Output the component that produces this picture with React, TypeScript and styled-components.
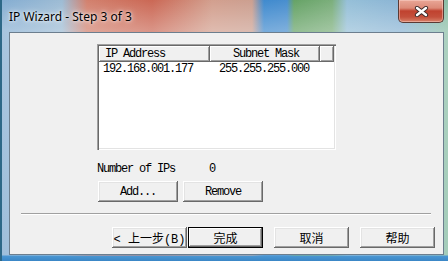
import styled, { createGlobalStyle } from 'styled-components'

const GlobalStyle = createGlobalStyle`
    html, body {
        margin: 0;
        padding: 0;
    }
    body {
        width: 448px;
        height: 261px;
        overflow: hidden;
        background: #6fa3cf;
    }
`

const mono = `"Liberation Mono", "DejaVu Sans Mono", monospace`
const cjk = `"Liberation Mono", "Noto Sans CJK SC", sans-serif`

export default function App() {
    return (
        <>
            <GlobalStyle />
            <StyledWindow>
                <StyledTitleBar>
                    <StyledTitle>IP Wizard - Step 3 of 3</StyledTitle>
                    <StyledClose aria-label="Close">
                        <svg width="15" height="11" viewBox="0 0 15 11">
                            <path d="M3 2 L12 9 M12 2 L3 9" stroke="#3a2a2a" strokeWidth="4.2" strokeLinecap="round" />
                            <path d="M3 2 L12 9 M12 2 L3 9" stroke="#ffffff" strokeWidth="2.4" strokeLinecap="round" />
                        </svg>
                    </StyledClose>
                </StyledTitleBar>
                <StyledClient>
                    <StyledBody>
                        <StyledList>
                            <StyledHeader>
                                <StyledHeaderCell $width={111} $align="left">IP Address</StyledHeaderCell>
                                <StyledHeaderCell $width={110} $align="center">Subnet Mask</StyledHeaderCell>
                                <StyledHeaderCell $align="left" />
                            </StyledHeader>
                            <StyledRow>
                                <StyledCell $width={111} $pad={4}>192.168.001.177</StyledCell>
                                <StyledCell $width={110} $pad={9}>255.255.255.000</StyledCell>
                            </StyledRow>
                        </StyledList>
                        <StyledCountRow>
                            <StyledCountLabel>Number of IPs</StyledCountLabel>
                            <span>0</span>
                        </StyledCountRow>
                        <StyledActionRow>
                            <StyledButton $width={80} $font={mono}>Add...</StyledButton>
                            <StyledButton $width={80} $font={mono}>Remove</StyledButton>
                        </StyledActionRow>
                    </StyledBody>
                    <StyledSeparator />
                    <StyledFooter>
                        <StyledButton $width={75} $font={cjk}>&lt; 上一步(B)</StyledButton>
                        <StyledButton $width={75} $font={cjk} $default>完成</StyledButton>
                        <StyledButton $width={75} $font={cjk} $gap={10}>取消</StyledButton>
                        <StyledButton $width={75} $font={cjk} $gap={10}>帮助</StyledButton>
                    </StyledFooter>
                </StyledClient>
            </StyledWindow>
        </>
    )
}

const StyledWindow = styled.div`
    box-sizing: border-box;
    width: 448px;
    height: 261px;
    display: flex;
    flex-direction: column;
    padding: 0 4px 6px 7px;
    border-left: 2px solid #2d6887;
    background:
        linear-gradient(0deg, #3a86c6 0, #4a96d2 5px, transparent 6px),
        linear-gradient(180deg, rgba(255, 255, 255, 0.05) 0, rgba(255, 255, 255, 0.32) 30px, rgba(255, 255, 255, 0.25) 100%),
        linear-gradient(90deg, #7ea9cf 0, #98b8d2 60px, #d07a66 85px, #c8604c 150px, #d09a88 210px, #c99a8a 250px, #3584cc 262px, #3f88cc 285px, #5e9e5e 292px, #74aa74 330px, #90bcd6 345px, #84b0d2 400px, #86bc9e 448px);
`

const StyledTitleBar = styled.div`
    height: 32px;
    display: flex;
    justify-content: space-between;
    align-items: flex-start;
`

const StyledTitle = styled.div`
    font-family: "Noto Sans", "Open Sans", sans-serif;
    font-size: 12px;
    line-height: 16px;
    color: #000;
    padding-top: 9px;
    text-shadow: 0 0 6px rgba(255, 255, 255, 0.9), 0 0 3px rgba(255, 255, 255, 0.9);
`

const StyledClose = styled.div`
    box-sizing: border-box;
    width: 46px;
    height: 23px;
    display: flex;
    align-items: center;
    justify-content: center;
    border: 1px solid #5b3a34;
    border-top: none;
    border-radius: 0 0 5px 5px;
    background: linear-gradient(180deg, #e9a797 0, #dc8a78 8px, #c0422f 11px, #c4503c 17px, #d8826a 22px);
    box-shadow: inset 0 0 0 1px rgba(255, 220, 210, 0.45);
`

const StyledClient = styled.div`
    box-sizing: border-box;
    height: 223px;
    display: flex;
    flex-direction: column;
    background: #f0f0f0;
    border: 1px solid #6c7e8e;
`

const StyledBody = styled.div`
    display: flex;
    flex-direction: column;
    align-items: flex-start;
    padding: 11px 0 0 87px;
`

const StyledList = styled.div`
    box-sizing: border-box;
    width: 239px;
    height: 106px;
    padding: 2px;
    background: #fff;
    box-shadow:
        inset 1px 1px #a0a0a0,
        inset 2px 2px #696969,
        inset -1px -1px #ffffff,
        inset -2px -2px #e3e3e3;
`

const StyledHeader = styled.div`
    display: flex;
    height: 16px;
`

const StyledHeaderCell = styled.div<{ $width?: number; $align: string }>`
    box-sizing: border-box;
    ${props => props.$width ? `width: ${props.$width}px; flex: none;` : 'flex: 1;'}
    height: 16px;
    padding: 0 4px 0 6px;
    font-family: ${mono};
    font-size: 12px;
    letter-spacing: -1.2px;
    line-height: 16px;
    color: #000;
    text-align: ${props => props.$align};
    white-space: nowrap;
    background: #f0f0f0;
    box-shadow:
        inset -1px -1px #696969,
        inset 1px 1px #ffffff,
        inset -2px -2px #a0a0a0;
`

const StyledRow = styled.div`
    display: flex;
    height: 14px;
`

const StyledCell = styled.div<{ $width: number; $pad: number }>`
    width: ${props => props.$width}px;
    padding-left: ${props => props.$pad}px;
    box-sizing: border-box;
    font-family: ${mono};
    font-size: 12px;
    letter-spacing: -1.2px;
    line-height: 14px;
    color: #000;
    white-space: nowrap;
`

const StyledCountRow = styled.div`
    display: flex;
    margin-top: 13px;
    font-family: ${mono};
    font-size: 12px;
    letter-spacing: -1.2px;
    line-height: 12px;
    color: #000;
`

const StyledCountLabel = styled.span`
    width: 112px;
`

const StyledActionRow = styled.div`
    display: flex;
    gap: 5px;
    margin-top: 6px;
    padding-left: 1px;
`

const StyledButton = styled.div<{ $width: number; $font: string; $default?: boolean; $gap?: number }>`
    box-sizing: border-box;
    width: ${props => props.$width}px;
    height: 21px;
    margin-left: ${props => props.$gap ?? 0}px;
    display: flex;
    align-items: center;
    justify-content: center;
    font-family: ${props => props.$font};
    font-size: 12px;
    letter-spacing: ${props => props.$font === mono ? '-1.2px' : '0'};
    color: #000;
    white-space: nowrap;
    background: #f0f0f0;
    box-shadow: ${props => props.$default
        ? `inset 0 0 0 1px #000, inset -2px -2px #696969, inset 2px 2px #ffffff, inset -3px -3px #a0a0a0`
        : `inset -1px -1px #696969, inset 1px 1px #ffffff, inset -2px -2px #a0a0a0, inset 2px 2px #e3e3e3`};
`

const StyledSeparator = styled.div`
    height: 0;
    margin: 11px 12px 0 11px;
    border-top: 1px solid #a0a0a0;
    border-bottom: 1px solid #ffffff;
`

const StyledFooter = styled.div`
    display: flex;
    justify-content: flex-end;
    margin-top: 12px;
    padding-right: 8px;
    gap: 1px;
`
